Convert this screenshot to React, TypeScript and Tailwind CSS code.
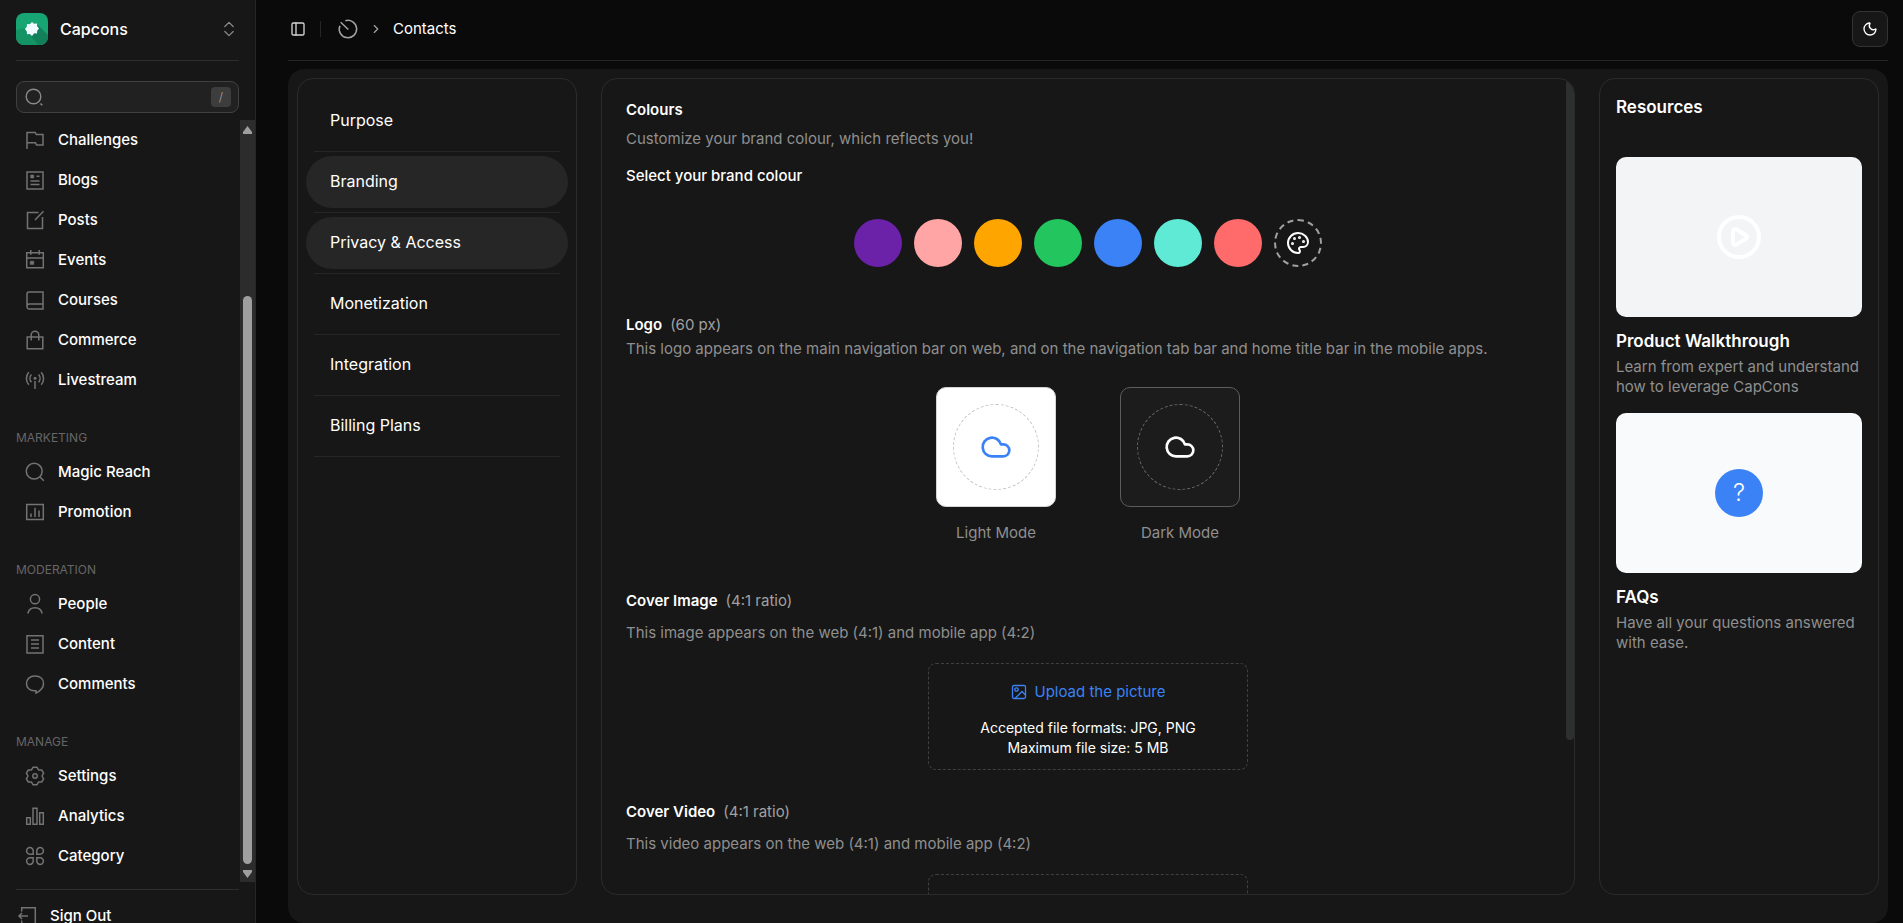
import type { ReactNode } from "react";
import {
  ChevronRight,
  ChevronsUpDown,
  CirclePlay,
  Cloud,
  Moon,
  Palette,
  PanelLeft,
} from "lucide-react";

type IconProps = {
  children: ReactNode;
  className?: string;
};

const LineIcon = ({ children, className = "" }: IconProps) => (
  <svg
    viewBox="-1 -1 22 22"
    fill="none"
    stroke="currentColor"
    strokeWidth={1.5}
    className={`size-[22px] shrink-0 ${className}`}
    aria-hidden="true"
  >
    {children}
  </svg>
);

const icons: Record<string, ReactNode> = {
  flag: <path d="M2 19V2.5h8.3l1 2H18V15h-6.5l-1-2.2H2" />,
  blog: (
    <>
      <path d="M2 2h16v17H2zM5.5 11h9M5.5 14.5h9M11.5 6.2h3" />
      <path d="M5.7 5h3v3h-3z" fill="currentColor" strokeWidth={0.6} />
    </>
  ),
  post: <path d="M13.5 2.5h-11v16h15V7M18.5 1.2 10 10" />,
  event: (
    <>
      <path d="M1.7 2.7h16.6v15H1.7zM5.8 0v4.8M14.2 0v4.8M1.7 8h16.6" />
      <path d="M5.2 11.2h3.6v3.2H5.2z" fill="currentColor" strokeWidth={0.6} />
    </>
  ),
  book: (
    <path d="M18 14V2H4a2 2 0 0 0-2 2v12.5M18 14H4.3a2.3 2.3 0 0 0-2.3 2.3A2.4 2.4 0 0 0 4.3 19H18v-5z" />
  ),
  bag: <path d="M2.2 7h15.6v11.7H2.2zM6.2 10.5V5a3.8 3.8 0 0 1 7.6 0v5.5" />,
  live: (
    <>
      <path d="M10 11v8M3.8 2.2a9.5 9.5 0 0 0 0 12.6M16.2 2.2a9.5 9.5 0 0 1 0 12.6M6.4 4.4a6 6 0 0 0 0 7.8M13.6 4.4a6 6 0 0 1 0 7.8" />
      <circle cx="10" cy="8.2" r="1.5" fill="currentColor" stroke="none" />
    </>
  ),
  search: (
    <>
      <circle cx="9.2" cy="9.2" r="7.9" />
      <path d="m15 15 3.8 3.8" />
    </>
  ),
  promo: <path d="M1.7 2.5h16.6v15H1.7zM6 15v-3.5M10 15V5.7M14 15V8.5" />,
  people: (
    <>
      <circle cx="10" cy="5.2" r="4.6" />
      <path d="M2.8 19.5a7.4 7.4 0 0 1 14.4 0" />
    </>
  ),
  content: <path d="M2 1.8h16V19H2zM6 6h8M6 10h8M6 14h8" />,
  comment: (
    <path d="M11 19v-2.3H9.3c-4.6 0-7.8-3-7.8-7.2S4.7 2 10 2s8.500 3.200 8.500 7.500c0 4.200-3.200 7.500-7.500 9.500z" />
  ),
  gear: (
    <>
      <path
        strokeLinejoin="round"
        d="M8.1 1.2h3.8l1.6 2.7 3.2.1 1.900 3.200L17 10l1.600 2.800-1.900 3.200-3.200.1-1.600 2.700H8.100l-1.600-2.700-3.200-.1-1.900-3.200L3 10 1.400 7.200 3.300 4l3.200-.1z"
      />
      <circle cx="10" cy="10" r="2.2" />
    </>
  ),
  chart: <path d="M1.7 11.7h3.6v6.500H1.700zM8 2.300h4v15.900H8zM14.700 6.700h3.600v11.500h-3.600z" />,
  category: (
    <path d="M8.2 8.2H5A3.300 3.300 0 1 1 8.200 5zM11.800 8.200H15A3.300 3.300 0 1 0 11.800 5zM8.200 11.800H5A3.300 3.300 0 1 0 8.200 15zM11.800 11.800H15A3.300 3.300 0 1 1 11.800 15z" />
  ),
  signOut: <path d="M4.7 5.500V1.800h13.600v16.400H4.700v-3.700M11 10H2M5 7l-3 3 3 3" />,
  dial: <path d="M7.300 1.700A8.700 8.700 0 1 1 1.900 6.700M2.700 3.200 10.300 10.500" />,
};

const groups = [
  {
    title: "",
    items: [
      ["flag", "Challenges"],
      ["blog", "Blogs"],
      ["post", "Posts"],
      ["event", "Events"],
      ["book", "Courses"],
      ["bag", "Commerce"],
      ["live", "Livestream"],
    ],
  },
  {
    title: "MARKETING",
    items: [
      ["search", "Magic Reach"],
      ["promo", "Promotion"],
    ],
  },
  {
    title: "MODERATION",
    items: [
      ["people", "People"],
      ["content", "Content"],
      ["comment", "Comments"],
    ],
  },
  {
    title: "MANAGE",
    items: [
      ["gear", "Settings"],
      ["chart", "Analytics"],
      ["category", "Category"],
    ],
  },
];

const steps = [
  { label: "Purpose", active: false },
  { label: "Branding", active: true },
  { label: "Privacy & Access", active: true },
  { label: "Monetization", active: false },
  { label: "Integration", active: false },
  { label: "Billing Plans", active: false },
];

const swatches = [
  { name: "Purple", color: "bg-[#6b21a8]" },
  { name: "Pink", color: "bg-[#ffa5a5]" },
  { name: "Orange", color: "bg-[#ffa500]" },
  { name: "Green", color: "bg-[#22c55e]" },
  { name: "Blue", color: "bg-[#3b82f6]" },
  { name: "Teal", color: "bg-[#5eead4]" },
  { name: "Coral", color: "bg-[#ff6b6b]" },
];

const Logo = () => (
  <svg viewBox="0 0 32 32" className="size-8 rounded-lg" aria-hidden="true">
    <rect width="32" height="32" fill="#17a673" />
    <path d="M10 20 21 11 32 22v10H20z" fill="#12805a" />
    <path d="M0 17 9 15l13 17H0z" fill="#149465" />
    <path
      d="m16 9 2.200 1.700 2.800-.2.200 2.700 1.800 2.300-1.800 2.300-.2 2.700-2.800-.2L16 23l-2.200-2-2.800.2-.2-2.700L9 16l1.800-2.300.2-2.700 2.800.2z"
      fill="#f1fbff"
    />
  </svg>
);

const Sidebar = () => (
  <aside className="flex w-64 shrink-0 flex-col border-r border-[#262626] bg-[#171717]">
    <button
      type="button"
      className="mx-4 flex h-[61px] shrink-0 items-center gap-3 border-b border-[#2e2e2e] pb-0.5 text-left"
    >
      <Logo />
      <span className="flex-1 text-base font-medium">Capcons</span>
      <ChevronsUpDown className="size-5 text-[#8a8a8a]" strokeWidth={1.5} />
    </button>

    <label className="mx-4 mt-5 mb-[7px] flex h-8 shrink-0 items-center rounded-lg border border-[#404040] bg-[#212121] pr-[7px] pl-1.5">
      <svg
        viewBox="-1 -1 22 22"
        fill="none"
        stroke="currentColor"
        strokeWidth={1.4}
        className="size-[22px] text-[#8a8a8a]"
        aria-hidden="true"
      >
        <circle cx="9.5" cy="9.5" r="7.3" />
        <path d="m16.500 16.500 1.800 1.800" />
      </svg>
      <input
        type="text"
        aria-label="Search"
        className="min-w-0 flex-1 bg-transparent px-2 text-sm outline-none"
      />
      <kbd className="flex size-5 items-center justify-center rounded bg-[#3d3d3d] font-[Inter,sans-serif] text-xs text-[#8f8f8f]">
        /
      </kbd>
    </label>

    <div className="flex min-h-0 flex-1">
      <nav className="min-w-0 flex-1 overflow-hidden pl-4">
        {groups.map((group) => (
          <div key={group.title}>
            {group.title && (
              <h2 className="pt-7 pb-1 text-xs leading-5 text-[#666]">
                {group.title}
              </h2>
            )}
            {group.items.map(([icon, label]) => (
              <a
                key={label}
                href="#"
                className="flex h-10 items-center gap-3 pl-2 text-[15px] font-medium"
              >
                <LineIcon className="text-[#737373]">{icons[icon]}</LineIcon>
                {label}
              </a>
            ))}
          </div>
        ))}
      </nav>
      <div className="flex w-[15px] flex-col items-center bg-[#2c2c2c] pt-1.5 pb-1">
        <svg viewBox="0 0 9 8" className="h-2 w-[9px] fill-[#9f9f9f]" aria-hidden="true">
          <path d="M4.5 0 9 6v2H0V6z" />
        </svg>
        <div className="min-h-0 flex-[162]" />
        <div className="min-h-0 w-[9px] flex-[568] rounded-full bg-[#9f9f9f]" />
        <div className="h-1.5" />
        <svg viewBox="0 0 9 8" className="h-2 w-[9px] fill-[#9f9f9f]" aria-hidden="true">
          <path d="M4.5 8 9 2V0H0v2z" />
        </svg>
      </div>
    </div>

    <div className="h-[41px] shrink-0 overflow-hidden px-4 pt-[7px]">
      <a
        href="#"
        className="flex items-center gap-3 border-t border-[#2e2e2e] pt-[15px] text-[15px] leading-[14px] font-medium"
      >
        <LineIcon className="text-[#737373]">{icons.signOut}</LineIcon>
        Sign Out
      </a>
    </div>
  </aside>
);

const Header = () => (
  <header className="flex h-[61px] shrink-0 items-center border-b border-[#262626] pb-0.5 pl-0.5">
    <button type="button" aria-label="Toggle sidebar">
      <PanelLeft className="size-4 text-[#d4d4d4]" />
    </button>
    <div className="mr-4 ml-3.5 h-4 w-px bg-[#262626]" />
    <nav className="flex items-center gap-2.5 text-[15px]">
      <LineIcon className="text-[#a3a3a3]">{icons.dial}</LineIcon>
      <ChevronRight className="size-3.5 text-[#a3a3a3]" />
      <span>Contacts</span>
    </nav>
    <button
      type="button"
      aria-label="Toggle theme"
      className="ml-auto flex size-9 items-center justify-center rounded-lg border border-[#333] bg-[#171717]"
    >
      <Moon className="size-4" />
    </button>
  </header>
);

const Steps = () => (
  <nav className="rounded-2xl border border-[#2b2b2b] px-2 pt-4">
    {steps.map((step) => (
      <div key={step.label} className="mb-1">
        <button
          type="button"
          className={`h-[52px] w-full rounded-full px-6 pb-0.5 text-left text-base ${
            step.active ? "bg-[#262626]" : ""
          }`}
        >
          {step.label}
        </button>
        <div className="mx-2 mt-1 h-px bg-[#262626]" />
      </div>
    ))}
  </nav>
);

const SectionTitle = ({ title, note }: { title: string; note: string }) => (
  <h3 className="flex gap-2 text-[15px] leading-5 font-semibold">
    {title}
    <span className="font-normal text-[#a1a1a1]">{note}</span>
  </h3>
);

const LogoCard = ({ label, dark }: { label: string; dark?: boolean }) => (
  <div className="flex flex-col items-center gap-4">
    <button
      type="button"
      aria-label={`Upload ${label} logo`}
      className={`flex size-[120px] items-center justify-center rounded-[10px] border ${
        dark
          ? "border-[#5c5c5c] bg-[#1c1c1c] text-white"
          : "border-[#d4d4d4] bg-white text-[#3b82f6]"
      }`}
    >
      <span
        className={`flex size-[86px] items-center justify-center rounded-full border border-dashed ${
          dark ? "border-[#6b6b6b]" : "border-[#c4c4c4]"
        }`}
      >
        <Cloud className="size-8" />
      </span>
    </button>
    <span className="text-[15px] leading-5 text-[#8f8f8f]">{label}</span>
  </div>
);

const UploadBox = ({ label }: { label: string }) => (
  <button
    type="button"
    className="mx-auto mt-5 flex h-[107px] w-80 flex-col items-center rounded-lg border border-dashed border-[#404040] pt-[18px] text-sm leading-5"
  >
    <span className="mb-4 flex items-center gap-2 text-[15px] text-[#3b82f6]">
      <svg
        viewBox="0 0 16 16"
        fill="none"
        stroke="currentColor"
        strokeWidth={1.3}
        className="size-4"
        aria-hidden="true"
      >
        <rect x="1.5" y="1.5" width="13" height="13" rx="1.5" />
        <circle cx="5.5" cy="5.5" r="1.7" />
        <path d="m4 14.500 7-7 3.500 3.500" />
      </svg>
      {label}
    </span>
    <span>Accepted file formats: JPG, PNG</span>
    <span>Maximum file size: 5 MB</span>
  </button>
);

const Branding = () => (
  <section className="relative min-h-0 overflow-hidden rounded-2xl border border-[#2b2b2b] px-6 pt-[21px]">
    <h3 className="text-[15px] leading-5 font-semibold">Colours</h3>
    <p className="mt-2 text-[15px] leading-[22px] text-[#8f8f8f]">
      Customize your brand colour, which reflects you!
    </p>
    <p className="mt-4 text-[15px] leading-5 font-medium">
      Select your brand colour
    </p>
    <div className="mt-[33px] flex justify-center gap-3">
      {swatches.map((swatch) => (
        <button
          key={swatch.name}
          type="button"
          aria-label={swatch.name}
          className={`size-12 rounded-full ${swatch.color}`}
        />
      ))}
      <button
        type="button"
        aria-label="Custom colour"
        className="flex size-12 items-center justify-center rounded-full border-2 border-dashed border-[#a1a1a1]"
      >
        <Palette className="size-6" />
      </button>
    </div>

    <div className="mt-12">
      <SectionTitle title="Logo" note="(60 px)" />
      <p className="mt-1 text-[15px] leading-5 text-[#8f8f8f]">
        This logo appears on the main navigation bar on web, and on the
        navigation tab bar and home title bar in the mobile apps.
      </p>
      <div className="mt-7 flex justify-center gap-16">
        <LogoCard label="Light Mode" />
        <LogoCard label="Dark Mode" dark />
      </div>
    </div>

    <div className="mt-12">
      <SectionTitle title="Cover Image" note="(4:1 ratio)" />
      <p className="mt-3 text-[15px] leading-5 text-[#8f8f8f]">
        This image appears on the web (4:1) and mobile app (4:2)
      </p>
      <UploadBox label="Upload the picture" />
    </div>

    <div className="mt-8">
      <SectionTitle title="Cover Video" note="(4:1 ratio)" />
      <p className="mt-3 text-[15px] leading-5 text-[#8f8f8f]">
        This video appears on the web (4:1) and mobile app (4:2)
      </p>
      <div className="mx-auto mt-5 h-[107px] w-80 rounded-lg border border-dashed border-[#404040]" />
    </div>

    {/* scroll thumb */}
    <div className="absolute top-px right-0 h-[81%] w-2 rounded bg-[#2e302f]" />
  </section>
);

const Resources = () => (
  <aside className="rounded-2xl border border-[#2b2b2b] px-4 pt-4">
    <h2 className="text-[17px] leading-6 font-semibold">Resources</h2>
    <div className="mt-[38px] flex h-40 items-center justify-center rounded-[10px] bg-[#f3f4f6]">
      <CirclePlay className="size-12 text-white" />
    </div>
    <h3 className="mt-3 text-[17px] leading-6 font-semibold">
      Product Walkthrough
    </h3>
    <p className="mt-1 text-[15px] leading-5 text-[#8f8f8f]">
      Learn from expert and understand how to leverage CapCons
    </p>
    <div className="mt-4 flex h-40 items-center justify-center rounded-[10px] bg-[#f9fafb]">
      <span className="flex size-12 items-center justify-center rounded-full bg-[#3b82f6] text-2xl font-light">
        ?
      </span>
    </div>
    <h3 className="mt-3 text-[17px] leading-6 font-semibold">FAQs</h3>
    <p className="mt-1 text-[15px] leading-5 text-[#8f8f8f]">
      Have all your questions answered with ease.
    </p>
  </aside>
);

const App = () => {
  return (
    <div className="flex h-screen overflow-hidden bg-[#0a0a0a] font-[Inter,sans-serif] text-white">
      <Sidebar />
      <main className="flex min-w-0 flex-1 flex-col pr-[15px] pl-8">
        <Header />
        <div className="mt-2 grid min-h-0 flex-1 grid-cols-[280px_minmax(0,1fr)_280px] grid-rows-[minmax(0,1fr)] gap-6 rounded-2xl bg-[#171717] p-[9px] pb-7">
          <Steps />
          <Branding />
          <Resources />
        </div>
      </main>
    </div>
  );
};

export default App;
